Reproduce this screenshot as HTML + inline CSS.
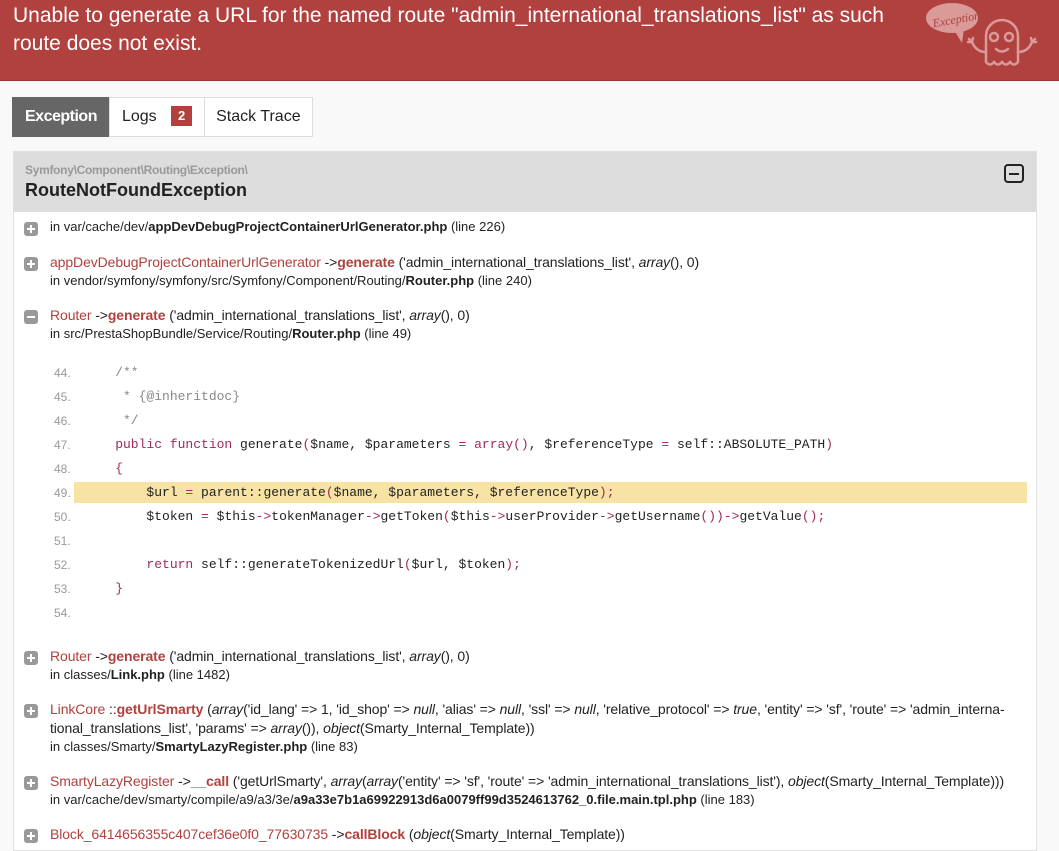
<!DOCTYPE html>
<html><head><meta charset="utf-8"><style>
*{margin:0;padding:0;box-sizing:border-box}
body{width:1059px;height:847px;overflow:hidden;background:#f9f9f9;font-family:"Liberation Sans",Arial,sans-serif;color:#222;position:relative}
.hdr{position:absolute;left:0;top:0;width:1059px;height:81px;background:#b0413e;border-bottom:1px solid #9e3532}
.hdr h1{position:absolute;left:13px;top:2px;width:895px;font-size:21px;font-weight:normal;color:#fff;line-height:28px}
.tabs{position:absolute;left:12px;top:97px;height:40px;display:flex;font-size:16px}
.tab{border:1px solid #ddd;background:#fff;height:40px;line-height:38px;padding:0 12px;color:#222;margin-right:-1px}
.tab.act{background:#666;color:#fff;border-color:#666;font-weight:bold;letter-spacing:-0.5px}
.badge{display:inline-block;background:#b0413e;color:#fff;font-size:13px;font-weight:bold;width:21px;height:20px;line-height:20px;text-align:center;margin-left:10px;vertical-align:1px}
.panel{position:absolute;left:13px;top:151px;width:1024px;height:700px;background:#fff;border:1px solid #e0e0e0}
.ph{height:60px;background:#ddd;position:relative}
.ns{position:absolute;left:11px;top:11px;font-size:12px;font-weight:bold;color:#999;letter-spacing:-0.3px}
.cls{position:absolute;left:11px;top:28px;font-size:18px;font-weight:bold;color:#222}
.tog{position:absolute;left:990px;top:12px;width:20px;height:19px;border:2px solid #222;border-radius:4px}
.tog:after{content:"";position:absolute;left:3px;top:6.5px;width:10px;height:2px;background:#222}
.tr{position:absolute;left:36px;font-size:13px;line-height:18px;color:#222;white-space:nowrap}
.tr .call{font-size:14px;letter-spacing:-0.1px}
.ic{position:absolute;left:10px;width:14px;height:14px;background:#999;border-radius:3px}
.ic:before{content:"";position:absolute;left:3px;top:6px;width:8px;height:2px;background:#fff}
.ic.p:after{content:"";position:absolute;left:6px;top:3px;width:2px;height:8px;background:#fff}
.c{color:#b0413e}.m{color:#b0413e;font-weight:bold}.b{font-weight:bold}
i{font-style:italic}
.code{position:absolute;left:0;top:209px;width:1022px;font-family:"Liberation Mono","DejaVu Sans Mono",monospace;font-size:13px}
.ln{position:absolute;height:24px;line-height:24px;width:1022px}
.ln .n{position:absolute;left:40px;font-family:"Liberation Sans",sans-serif;font-size:12px;color:#999}
.ln .t{position:absolute;left:70px;white-space:pre;color:#222}
.hl{position:absolute;left:60px;width:953px;height:21px;background:#f7e3a3}
.k{color:#a0295e}.cm{color:#888}
</style></head><body>
<div class="hdr"><h1>Unable to generate a URL for the named route "admin_international_translations_list" as such route does not exist.</h1>
<svg style="position:absolute;left:900px;top:0" width="159" height="80" viewBox="0 0 159 80">
<ellipse cx="52" cy="18" rx="26" ry="15" fill="#d99a98"/><path d="M54 30 L62 43 L64 29Z" fill="#d99a98"/>
<text x="32" y="24" font-family="Liberation Serif,serif" font-style="italic" font-size="12" fill="#b0413e" transform="rotate(-10 52 18)">Exception!</text>
<g fill="none" stroke="#d99a98" stroke-width="2.5" stroke-linecap="round"><path d="M86 62 V36 a16 16 0 0 1 32 0 V62 q-4 5 -8 0 q-4 5 -8 0 q-4 5 -8 0 q-4 5 -8 0"/>
<path d="M86 52 q-10 0 -14 -10 M72 42 l-3 -3 M72 42 l1 -4 M72 42 l-4 0 M118 52 q10 0 14 -10 M132 42 l3 -3 M132 42 l-1 -4 M132 42 l4 0"/><path d="M96 49 q6 5 12 0"/></g>
<circle cx="94" cy="37" r="4" fill="none" stroke="#d99a98" stroke-width="2.5"/><circle cx="109" cy="37" r="4" fill="none" stroke="#d99a98" stroke-width="2.5"/>
</svg></div>
<div class="tabs"><div class="tab act">Exception</div><div class="tab">Logs <span class="badge">2</span></div><div class="tab" style="padding:0 11px">Stack Trace</div></div>
<div class="panel">
<div class="ph"><div class="ns">Symfony\Component\Routing\Exception\</div><div class="cls">RouteNotFoundException</div><div class="tog"></div></div>
<div class="ic p" style="top:70px"></div><div class="tr" style="top:66px">in var/cache/dev/<span class="b">appDevDebugProjectContainerUrlGenerator.php</span> (line 226)</div>
<div class="ic p" style="top:105px"></div><div class="tr" style="top:101px"><span class="call"><span class="c">appDevDebugProjectContainerUrlGenerator</span> -&gt;<span class="m">generate</span> ('admin_international_translations_list', <i>array</i>(), 0)</span><br>in vendor/symfony/symfony/src/Symfony/Component/Routing/<span class="b">Router.php</span> (line 240)</div>
<div class="ic" style="top:158px"></div><div class="tr" style="top:154px"><span class="call"><span class="c">Router</span> -&gt;<span class="m">generate</span> ('admin_international_translations_list', <i>array</i>(), 0)</span><br>in src/PrestaShopBundle/Service/Routing/<span class="b">Router.php</span> (line 49)</div>
<div class="code">
<div class="ln" style="top:0"><span class="n">44.</span><span class="t"><span class="cm">    /**</span></span></div>
<div class="ln" style="top:24px"><span class="n">45.</span><span class="t"><span class="cm">     * {@inheritdoc}</span></span></div>
<div class="ln" style="top:48px"><span class="n">46.</span><span class="t"><span class="cm">     */</span></span></div>
<div class="ln" style="top:72px"><span class="n">47.</span><span class="t"><span class="k">    public function</span> generate<span class="k">(</span>$name, $parameters <span class="k">=</span> <span class="k">array()</span>, $referenceType <span class="k">=</span> self::ABSOLUTE_PATH<span class="k">)</span></span></div>
<div class="ln" style="top:96px"><span class="n">48.</span><span class="t"><span class="k">    {</span></span></div>
<div class="hl" style="top:121px"></div>
<div class="ln" style="top:120px"><span class="n">49.</span><span class="t">        $url <span class="k">=</span> parent::generate<span class="k">(</span>$name, $parameters, $referenceType<span class="k">);</span></span></div>
<div class="ln" style="top:144px"><span class="n">50.</span><span class="t">        $token <span class="k">=</span> $this<span class="k">-&gt;</span>tokenManager<span class="k">-&gt;</span>getToken<span class="k">(</span>$this<span class="k">-&gt;</span>userProvider<span class="k">-&gt;</span>getUsername<span class="k">())-&gt;</span>getValue<span class="k">();</span></span></div>
<div class="ln" style="top:168px"><span class="n">51.</span></div>
<div class="ln" style="top:192px"><span class="n">52.</span><span class="t"><span class="k">        return</span> self::generateTokenizedUrl<span class="k">(</span>$url, $token<span class="k">);</span></span></div>
<div class="ln" style="top:216px"><span class="n">53.</span><span class="t"><span class="k">    }</span></span></div>
<div class="ln" style="top:240px"><span class="n">54.</span></div>
</div>
<div class="ic p" style="top:499px"></div><div class="tr" style="top:495px"><span class="call"><span class="c">Router</span> -&gt;<span class="m">generate</span> ('admin_international_translations_list', <i>array</i>(), 0)</span><br>in classes/<span class="b">Link.php</span> (line 1482)</div>
<div class="ic p" style="top:552px"></div><div class="tr" style="top:548px"><span class="call"><span class="c">LinkCore</span> ::<span class="m">getUrlSmarty</span> (<i>array</i>('id_lang' =&gt; 1, 'id_shop' =&gt; <i>null</i>, 'alias' =&gt; <i>null</i>, 'ssl' =&gt; <i>null</i>, 'relative_protocol' =&gt; <i>true</i>, 'entity' =&gt; 'sf', 'route' =&gt; 'admin_interna-<br>tional_translations_list', 'params' =&gt; <i>array</i>()), <i>object</i>(Smarty_Internal_Template))</span><br>in classes/Smarty/<span class="b">SmartyLazyRegister.php</span> (line 83)</div>
<div class="ic p" style="top:624px"></div><div class="tr" style="top:620px"><span class="call"><span class="c">SmartyLazyRegister</span> -&gt;<span class="m">__call</span> ('getUrlSmarty', <i>array</i>(<i>array</i>('entity' =&gt; 'sf', 'route' =&gt; 'admin_international_translations_list'), <i>object</i>(Smarty_Internal_Template)))</span><br>in var/cache/dev/smarty/compile/a9/a3/3e/<span class="b">a9a33e7b1a69922913d6a0079ff99d3524613762_0.file.main.tpl.php</span> (line 183)</div>
<div class="ic p" style="top:677px"></div><div class="tr" style="top:673px"><span class="call"><span class="c">Block_6414656355c407cef36e0f0_77630735</span> -&gt;<span class="m">callBlock</span> (<i>object</i>(Smarty_Internal_Template))</span></div>
</div>
</body></html>
